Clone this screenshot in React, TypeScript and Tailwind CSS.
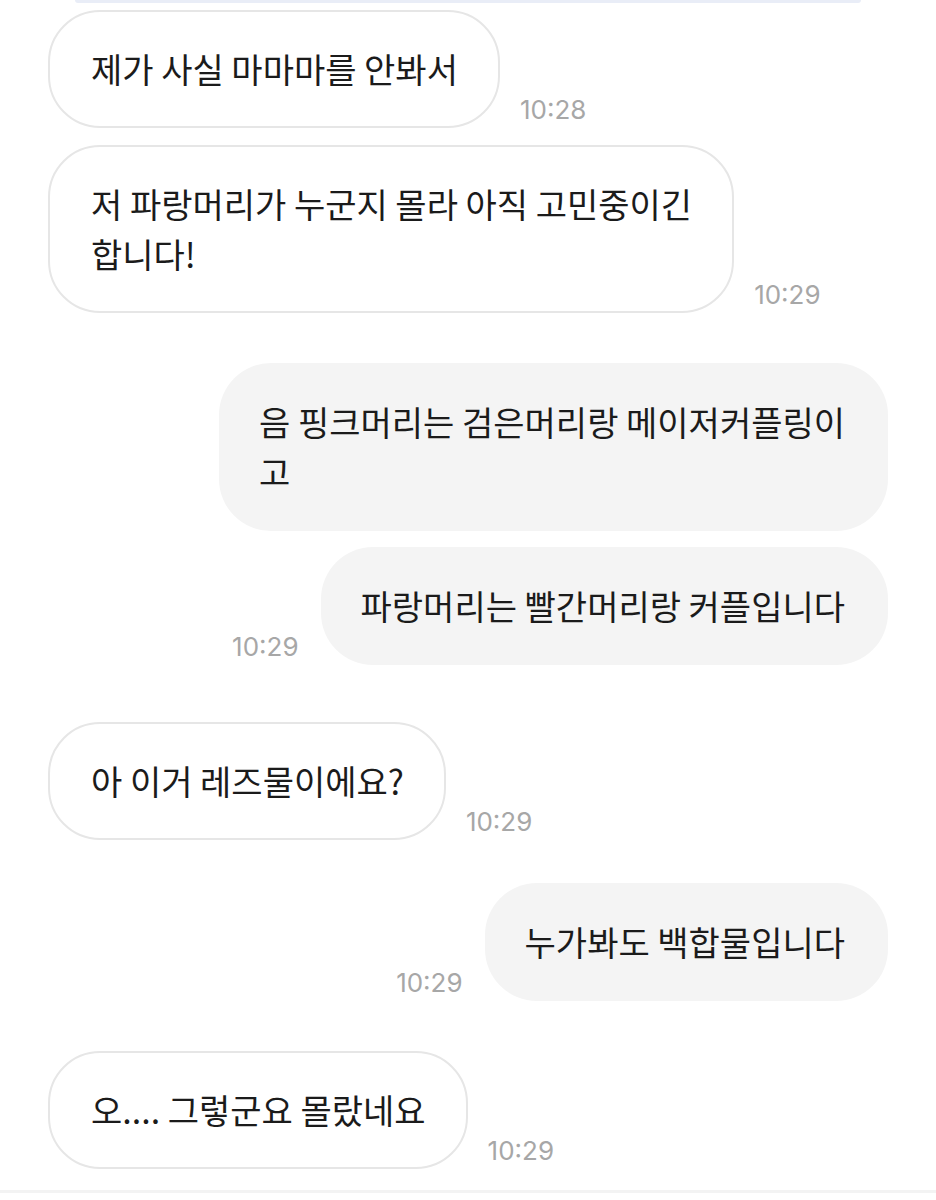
import React from "react";

const KR = { fontFamily: '"Noto Sans CJK KR", "Noto Sans", sans-serif' };
const TS = { fontFamily: 'Inter, "Noto Sans", sans-serif' };

function Time({ t }: { t: string }) {
  return (
    <span className="text-[26px] leading-none text-[#a7a7a7] pb-[5px] shrink-0" style={TS}>
      {t}
    </span>
  );
}

function Received({ lines, time, mt }: { lines: string[]; time: string; mt: string }) {
  return (
    <div className={`flex items-end gap-[20px] pl-[48px] ${mt}`}>
      <div className="rounded-[52px] border-2 border-[#e6e6e6] bg-white pl-[41px] pr-[40px] py-[32px] text-[34px] leading-[50px] text-[#1b1b1b]">
        {lines.map((l, i) => (
          <div key={i}>{l}</div>
        ))}
      </div>
      <Time t={time} />
    </div>
  );
}

function Sent({ lines, time, mt }: { lines: string[]; time?: string; mt: string }) {
  return (
    <div className={`flex items-end justify-end gap-[22px] pr-[48px] ${mt}`}>
      {time && <Time t={time} />}
      <div className="rounded-[52px] bg-[#f4f4f4] pl-[40px] pr-[43px] py-[34px] text-[34px] leading-[50px] text-[#1b1b1b]">
        {lines.map((l, i) => (
          <div key={i}>{l}</div>
        ))}
      </div>
    </div>
  );
}

export default function App() {
  return (
    <div className="w-[936px] h-[1200px] bg-white overflow-hidden flex flex-col" style={KR}>
      <div className="mx-[75px] h-[3px] shrink-0 rounded-b-[40px] bg-[#e9edf7]" />
      <Received lines={["제가 사실 마마마를 안봐서"]} time="10:28" mt="mt-[7px]" />
      <Received lines={["저 파랑머리가 누군지 몰라 아직 고민중이긴", "합니다!"]} time="10:29" mt="mt-[17px]" />
      <Sent lines={["음 핑크머리는 검은머리랑 메이저커플링이", "고"]} mt="mt-[50px]" />
      <Sent lines={["파랑머리는 빨간머리랑 커플입니다"]} time="10:29" mt="mt-[16px]" />
      <Received lines={["아 이거 레즈물이에요?"]} time="10:29" mt="mt-[57px]" />
      <Sent lines={["누가봐도 백합물입니다"]} time="10:29" mt="mt-[43px]" />
      <Received lines={["오.... 그렇군요 몰랐네요"]} time="10:29" mt="mt-[50px]" />
      <div className="flex-1" />
      <div className="h-[10px] shrink-0 border-t-[3px] border-[#f3f3f3] bg-white" />
    </div>
  );
}
